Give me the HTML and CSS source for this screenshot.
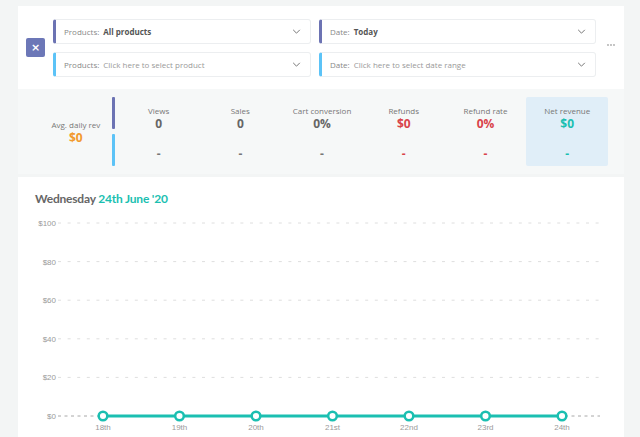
FILE: index.html
```html
<!DOCTYPE html>
<html>
<head>
<meta charset="utf-8">
<link rel="stylesheet" href="styles.css">
</head>
<body>
<div class="page">
  <div class="filters-card">
    <button class="clear-btn">×</button>
    <div class="filters">
      <div class="select primary"><span class="lbl">Products:</span><span class="val">All products</span><svg class="chev" viewBox="0 0 10 6"><path d="M1 1l4 4 4-4" fill="none" stroke="#777" stroke-width="1.2"/></svg></div>
      <div class="select primary"><span class="lbl">Date:</span><span class="val">Today</span><svg class="chev" viewBox="0 0 10 6"><path d="M1 1l4 4 4-4" fill="none" stroke="#777" stroke-width="1.2"/></svg></div>
      <div class="select secondary"><span class="lbl">Products:</span><span class="ph">Click here to select product</span><svg class="chev" viewBox="0 0 10 6"><path d="M1 1l4 4 4-4" fill="none" stroke="#777" stroke-width="1.2"/></svg></div>
      <div class="select secondary"><span class="lbl">Date:</span><span class="ph">Click here to select date range</span><svg class="chev" viewBox="0 0 10 6"><path d="M1 1l4 4 4-4" fill="none" stroke="#777" stroke-width="1.2"/></svg></div>
    </div>
    <svg class="more" width="8" height="2" viewBox="0 0 8 2"><circle cx="1" cy="1" r="0.9" fill="#aaa"/><circle cx="4" cy="1" r="0.9" fill="#aaa"/><circle cx="7" cy="1" r="0.9" fill="#aaa"/></svg>
  </div>

  <div class="stats">
    <div class="avg">
      <div class="slabel">Avg. daily rev</div>
      <div class="sval orange">$0</div>
    </div>
    <div class="bars"><span class="bar purple"></span><span class="bar blue"></span></div>
    <div class="stat"><div class="slabel">Views</div><div class="sval">0</div><div class="dash">-</div></div>
    <div class="stat"><div class="slabel">Sales</div><div class="sval">0</div><div class="dash">-</div></div>
    <div class="stat"><div class="slabel">Cart conversion</div><div class="sval">0%</div><div class="dash">-</div></div>
    <div class="stat"><div class="slabel">Refunds</div><div class="sval red">$0</div><div class="dash red">-</div></div>
    <div class="stat"><div class="slabel">Refund rate</div><div class="sval red">0%</div><div class="dash red">-</div></div>
    <div class="stat hl"><div class="slabel">Net revenue</div><div class="sval teal">$0</div><div class="dash teal">-</div></div>
  </div>

  <div class="chart-card">
    <div class="chart-title">Wednesday <span class="teal">24th June '20</span></div>
    <svg class="chart" width="606" height="240" viewBox="0 0 606 240">
      <g stroke="#dedede" stroke-width="1" stroke-dasharray="3 6.6">
        <line x1="40" y1="16" x2="582" y2="16"/>
        <line x1="40" y1="54.6" x2="582" y2="54.6"/>
        <line x1="40" y1="93.2" x2="582" y2="93.2"/>
        <line x1="40" y1="131.8" x2="582" y2="131.8"/>
        <line x1="40" y1="170.4" x2="582" y2="170.4"/>
      </g>
      <line x1="40" y1="209" x2="582" y2="209" stroke="#a8a8a8" stroke-width="1" stroke-dasharray="3 3.5"/>
      <g font-family="Liberation Sans, Arial, sans-serif" font-size="8" fill="#9a9a9a" text-anchor="end">
        <text x="38" y="19">$100</text>
        <text x="38" y="57.6">$80</text>
        <text x="38" y="96.2">$60</text>
        <text x="38" y="134.8">$40</text>
        <text x="38" y="173.4">$20</text>
        <text x="38" y="212">$0</text>
      </g>
      <line x1="85" y1="209" x2="544" y2="209" stroke="#1bbfb1" stroke-width="3"/>
      <g fill="#fff" stroke="#1bbfb1" stroke-width="2.5">
        <circle cx="85" cy="209" r="4.3"/>
        <circle cx="161.5" cy="209" r="4.3"/>
        <circle cx="238" cy="209" r="4.3"/>
        <circle cx="314.5" cy="209" r="4.3"/>
        <circle cx="391" cy="209" r="4.3"/>
        <circle cx="467.5" cy="209" r="4.3"/>
        <circle cx="544" cy="209" r="4.3"/>
      </g>
      <g font-family="Liberation Sans, Arial, sans-serif" font-size="8" fill="#9a9a9a" text-anchor="middle">
        <text x="85" y="223">18th</text>
        <text x="161.5" y="223">19th</text>
        <text x="238" y="223">20th</text>
        <text x="314.5" y="223">21st</text>
        <text x="391" y="223">22nd</text>
        <text x="467.5" y="223">23rd</text>
        <text x="544" y="223">24th</text>
      </g>
    </svg>
  </div>
</div>
</body>
</html>
```

FILE: styles.css
```css
* { box-sizing: border-box; }
html, body { margin: 0; padding: 0; }
body {
  background: #f3f5f5;
  font-family: "Open Sans", "Liberation Sans", sans-serif;
  width: 640px;
  height: 437px;
  overflow: hidden;
}
.page {
  padding: 6px 16px 0 18px;
}
.filters-card {
  background: #fff;
  height: 83px;
  display: flex;
  align-items: center;
  padding: 0 0 0 8px;
}
.clear-btn {
  width: 19px;
  height: 19px;
  border: none;
  border-radius: 2px;
  background: #6c77b7;
  color: #fff;
  font-size: 11px;
  font-weight: bold;
  line-height: 19px;
  padding: 0;
  margin: 0 8px 0 0;
  font-family: "DejaVu Sans", sans-serif;
}
.filters {
  display: grid;
  grid-template-columns: 258px 277px;
  grid-auto-rows: 25px;
  gap: 8px;
}
.select {
  display: flex;
  align-items: center;
  border: 1px solid #eceef0;
  border-left: 3px solid #6c73b3;
  border-radius: 3px;
  padding: 0 9px 0 8px;
  font-size: 8px;
  color: #888;
}
.select.secondary { border-left-color: #5cc3f7; }
.lbl { margin-right: 4px; }
.val { font-weight: bold; color: #555; }
.ph { color: #999; }
.chev { width: 9px; height: 5px; margin-left: auto; }
.more {
  margin-left: 11px;
  margin-top: -6px;
  display: block;
}
.stats {
  background: #f6f8f8;
  height: 85px;
  display: flex;
  align-items: stretch;
  padding: 8px 16px 8px 0;
}
.avg {
  width: 94px;
  display: flex;
  flex-direction: column;
  align-items: center;
  justify-content: center;
  padding-left: 22px;
  padding-top: 0;
}
.bars {
  width: 4px;
  display: flex;
  flex-direction: column;
  gap: 5px;
  margin-right: 2px;
}
.bar { width: 3px; flex: 1; display: block; border-radius: 1px; }
.bar.purple { background: #6c73b3; }
.bar.blue { background: #5cc3f7; }
.stat {
  width: 82px;
  display: flex;
  flex-direction: column;
  align-items: center;
  padding-top: 8px;
}
.stat.hl { background: #e0eef8; border-radius: 2px; }
.slabel {
  font-size: 8px;
  color: #777;
  line-height: 11px;
}
.sval {
  font-size: 12px;
  font-weight: bold;
  color: #666;
  line-height: 15px;
}
.dash {
  font-size: 12px;
  font-weight: bold;
  color: #777;
  margin-top: 15px;
  line-height: 15px;
}
.orange { color: #f29a2e; }
.red { color: #d9434a; }
.teal { color: #1bbfb1; }
.chart-card {
  background: #fff;
  margin-top: 3px;
  height: 270px;
}
.chart-title {
  font-family: Lato, "Open Sans", sans-serif;
  font-weight: bold;
  font-size: 12px;
  color: #666;
  line-height: 16px;
  padding: 14px 0 0 17px;
  letter-spacing: -0.2px;
}
.chart { display: block; margin-top: 0; }
```
